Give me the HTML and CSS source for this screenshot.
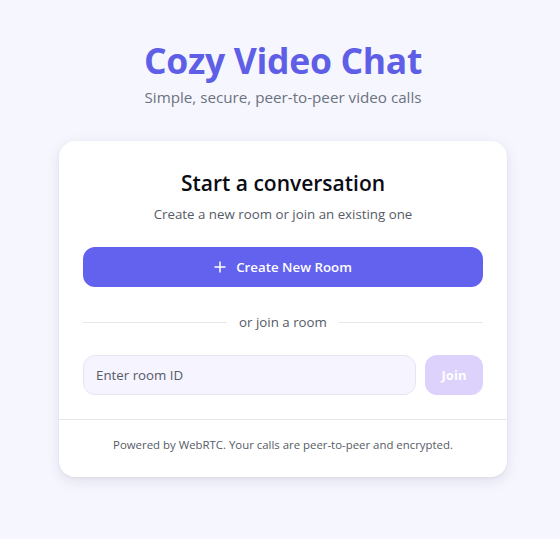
FILE: index.html
```html
<!DOCTYPE html>
<html lang="en">
<head>
<meta charset="utf-8">
<title>Cozy Video Chat</title>
<link rel="stylesheet" href="styles.css">
</head>
<body>
<main class="page">
  <header class="hero">
    <h1 class="brand">Cozy Video Chat</h1>
    <p class="tagline">Simple, secure, peer-to-peer video calls</p>
  </header>
  <section class="card">
    <div class="card-body">
      <h2 class="card-title">Start a conversation</h2>
      <p class="card-sub">Create a new room or join an existing one</p>
      <button class="btn-primary" type="button">
        <svg class="plus" width="12" height="12" viewBox="0 0 12 12" aria-hidden="true"><path d="M6 1v10M1 6h10" stroke="currentColor" stroke-width="1.5" stroke-linecap="round"/></svg>
        <span>Create New Room</span>
      </button>
      <div class="divider"><span>or join a room</span></div>
      <div class="join-row">
        <input class="room-input" type="text" placeholder="Enter room ID">
        <button class="btn-join" type="button">Join</button>
      </div>
    </div>
    <footer class="card-foot">Powered by WebRTC. Your calls are peer-to-peer and encrypted.</footer>
  </section>
</main>
</body>
</html>
```
FILE: styles.css
```css
* { box-sizing: border-box; }
html, body { margin: 0; padding: 0; }
body {
  background: #f6f6fe;
  font-family: "Open Sans", "Noto Sans", sans-serif;
  color: #111827;
  min-height: 539px;
}
.page {
  display: flex;
  flex-direction: column;
  align-items: center;
  padding-top: 37px;
  padding-left: 6px;
}
.hero { text-align: center; }
.brand {
  margin: 0;
  font-size: 35.5px;
  line-height: 46px;
  font-weight: 700;
  color: #5e5fe6;
  letter-spacing: -0.3px;
}
.tagline {
  margin: 3px 0 0;
  font-size: 15.2px;
  line-height: 22px;
  color: #6b7280;
}
.card {
  margin-top: 33px;
  width: 448px;
  background: #fff;
  border-radius: 16px;
  box-shadow: 0 4px 14px rgba(30, 30, 80, 0.10), 0 1px 3px rgba(0,0,0,0.05);
  overflow: hidden;
}
.card-body {
  padding: 27px 24px 24px;
  display: flex;
  flex-direction: column;
  align-items: stretch;
}
.card-title {
  margin: 0;
  text-align: center;
  font-size: 21px;
  line-height: 30px;
  font-weight: 600;
  color: #0b0b14;
}
.card-sub {
  margin: 6px 0 0;
  text-align: center;
  font-size: 13.3px;
  line-height: 20px;
  color: #555b66;
}
.btn-primary {
  margin-top: 23px;
  height: 40px;
  border: 0;
  border-radius: 12px;
  background: #6262ee;
  color: #fff;
  font-family: inherit;
  font-size: 13.3px;
  font-weight: 600;
  display: flex;
  align-items: center;
  justify-content: center;
  gap: 10px;
}
.plus { display: block; }
.divider {
  margin-top: 26px;
  display: flex;
  align-items: center;
  gap: 12px;
  font-size: 13.3px;
  line-height: 18px;
  color: #555b66;
}
.divider::before, .divider::after {
  content: "";
  flex: 1;
  height: 1px;
  background: #e5e7eb;
}
.join-row {
  margin-top: 24px;
  display: flex;
  gap: 9px;
}
.room-input {
  flex: 1;
  height: 40px;
  border: 1px solid #e6e4f2;
  border-radius: 12px;
  background: #f6f4ff;
  padding: 0 12px;
  font-family: inherit;
  font-size: 13.3px;
  color: #111827;
  outline: none;
}
.room-input::placeholder { color: #555b66; }
.btn-join {
  width: 58px;
  height: 40px;
  border: 0;
  border-radius: 12px;
  background: #dcd2fc;
  color: #fff;
  font-family: inherit;
  font-size: 13px;
  font-weight: 700;
}
.card-foot {
  border-top: 1px solid #e5e7eb;
  padding: 16px 24px 23px;
  text-align: center;
  font-size: 11.4px;
  line-height: 18px;
  color: #555b66;
}
```
